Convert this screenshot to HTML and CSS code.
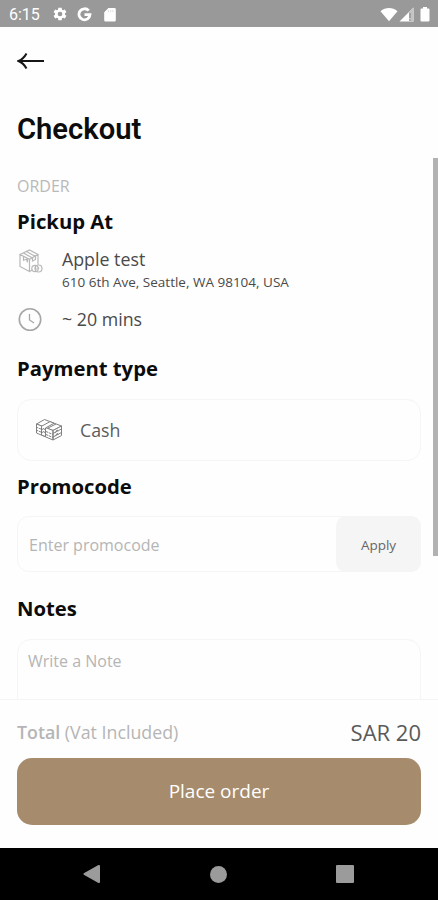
FILE: index.html
```html
<!DOCTYPE html>
<html lang="en">
<head>
<meta charset="UTF-8">
<meta name="viewport" content="width=device-width, initial-scale=1.0">
<title>Checkout</title>
<link rel="stylesheet" href="styles.css">
</head>
<body>

<div class="status-bar">
  <span class="time">6:15</span>
  <svg class="gear" width="16" height="16" viewBox="0 0 24 24"><path fill="#fff" fill-rule="evenodd" d="M19.4 13c.1-.6.1-1.300 0-2l2.200-1.700-2.200-3.900-2.700 1.100-1.700-1L14.500 2.500h-5L9 5.500l-1.700 1-2.700-1.100-2.200 3.900L4.600 11c-.1.700-.1 1.400 0 2l-2.200 1.700 2.200 3.900 2.700-1.100 1.700 1 .5 3h5l.5-3 1.700-1 2.700 1.100 2.200-3.900zM12 8.500a3.500 3.500 0 1 1 0 7 3.500 3.500 0 0 1 0-7z"/></svg>
  <svg class="google" width="15" height="15" viewBox="0 0 15 15"><path fill="none" stroke="#fff" stroke-width="2.800" d="M11.700 3.700A5.500 5.500 0 1 0 13 7.700H7.500"/></svg>
  <svg class="sd" width="12" height="15" viewBox="0 0 12 15"><path fill="#fff" d="M4.500 1H10.500a1.300 1.300 0 0 1 1.300 1.300v10.900a1.300 1.300 0 0 1-1.300 1.300h-9a1.300 1.300 0 0 1-1.300-1.300V5.200z"/><path stroke="#ddd" stroke-width="1" d="M4.500 3.200v2M6.700 3.200v2M8.900 3.200v2"/></svg>
  <div class="signals">
    <svg width="18" height="15" viewBox="0 0 18 15"><path fill="#fff" d="M.5 4.200C5.500-.2 12.500-.2 17.500 4.200L9 14.300z"/></svg>
    <svg class="cell" width="15" height="15" viewBox="0 0 15 15"><path fill="#fff" d="M14.500.5v14H.5z"/><path fill="#c4c4c4" d="M10 5l4.500-4.500v14H10z"/><path stroke="#8d8d8d" stroke-width="1.200" d="M11 6v5M11 12.200v1.500"/></svg>
    <svg class="battery" width="10" height="15" viewBox="0 0 10 15"><path fill="#fff" d="M3 0h4v1.500h1.500q1 0 1 1v11q0 1-1 1h-7q-1 0-1-1v-11q0-1 1-1H3z"/></svg>
  </div>
</div>

<main class="content">
  <svg class="back" width="28" height="18" viewBox="0 0 28 18"><path d="M27 9H1.500M9.500 1.500Q6.500 7 1.500 9Q6.500 11 9.500 16.500" fill="none" stroke="#161616" stroke-width="2"/></svg>
  <h1>Checkout</h1>

  <div class="label">ORDER</div>
  <h2 class="pickup-title">Pickup At</h2>
  <div class="row place">
    <svg width="26" height="28" viewBox="0 -2 26 28" fill="none" stroke="#b8b8b8" stroke-width="1.200">
      <path d="M2 5.500L11.500 1l8.500 4.500-8.500 4.700zM2 5.500v12l9.500 5V10.200M20 5.500v10M11.500 22.500l3-1.500M5.500 4l9 5M8.500 2.500l9 5M5.500 7.200v4l3-1 1 3V9M14.500 9v3l3-1.500V7.500"/>
      <circle cx="17" cy="19.500" r="3.200"/><circle cx="20.500" cy="19.500" r="3.500"/><path d="M17.500 18v2h2M20.500 18v2"/>
    </svg>
    <div>
      <div class="name">Apple test</div>
      <div class="address">610 6th Ave, Seattle, WA 98104, USA</div>
    </div>
  </div>
  <div class="row eta">
    <svg width="26" height="26" viewBox="0 0 26 26" fill="none" stroke="#a6a6a6"><circle cx="12" cy="13.500" r="10.700" stroke-width="1.600"/><path d="M11.500 8v6l4.500 3" stroke-width="1.300"/></svg>
    <div class="name">~ 20 mins</div>
  </div>

  <h2 class="payment-title">Payment type</h2>
  <div class="card">
    <svg width="28" height="24" viewBox="0 0 28 24" fill="#fff" stroke="#808080" stroke-width="1" stroke-linejoin="round">
      <path d="M1.500 6L9.500 1.500L26.500 8l-8.500 4.500z"/>
      <path d="M1.500 6L18 12.500v9.500L1.500 15zM18 12.500L26.500 8v9.500L18 22z"/>
      <path fill="none" stroke-dasharray="2.500 .8" d="M1 9l6 2.500M1 12l6 2.500M11 13.500l7 3M11 16.500l7 3M18 15.500l8-4.300M18 19l8-4.300"/>
      <path d="M6.500 8.300L15 3.600l4 1.700-8.500 4.700v8.500l-4-1.500z"/>
      <path fill="none" d="M7 11.500l2-1 1.500 2M7 14.500l2-1 1.500 2M13 10l8-4M20 15l2-3 2 1M20 18.500l2-3 2 1"/>
    </svg>
    <span>Cash</span>
  </div>

  <h2 class="promo-title">Promocode</h2>
  <div class="promo">
    <input type="text" placeholder="Enter promocode">
    <button>Apply</button>
  </div>

  <h2 class="notes-title">Notes</h2>
  <textarea placeholder="Write a Note"></textarea>
  <div class="scrollbar"></div>
</main>

<footer class="summary">
  <div class="total">
    <span><b>Total</b> (Vat Included)</span>
    <span class="price">SAR 20</span>
  </div>
  <button class="place-order">Place order</button>
</footer>

<nav class="nav-bar">
  <svg width="18" height="20" viewBox="0 0 18 20"><path fill="#9b9b9b" d="M.8 9.200L15.500 1Q17 .6 17 2v16q0 1.400-1.500 1L.8 10.800Q0 10 .8 9.200z"/></svg>
  <div class="home"></div>
  <div class="recent"></div>
</nav>

</body>
</html>
```
FILE: styles.css
```css
* {
  box-sizing: border-box;
}
body {
  margin: 0;
  height: 900px;
  display: flex;
  flex-direction: column;
  overflow: hidden;
  background-color: #fefefe;
  font-family: "Open Sans", sans-serif;
  color: #4a4a4a;
}
svg {
  display: block;
  flex: none;
}
h1, h2 {
  margin: 0;
  color: #0c0c0c;
}
input, textarea, button {
  font-family: inherit;
  border: 0;
  outline: 0;
}
.status-bar {
  height: 27px;
  flex: none;
  display: flex;
  align-items: center;
  padding: 1px 8px 0 9px;
  background-color: #999;
  color: #fff;
}
.time {
  width: 43px;
  padding-top: 1px;
  font: 16px/26px Roboto, sans-serif;
}
.google {
  margin-left: 9px;
}
.sd {
  margin-left: 12px;
}
.signals {
  display: flex;
  margin-left: auto;
}
.cell {
  margin-left: 1px;
}
.battery {
  margin-left: 6px;
}
.content {
  position: relative;
  flex: 1;
  min-height: 0;
  overflow: hidden;
  padding: 25px 17px 0;
}
h1 {
  margin-top: 41px;
  font: 600 29.2px/36px Roboto, sans-serif;
}
.label {
  margin-top: 28px;
  font-size: 16px;
  line-height: 22px;
  color: #b9b9b9;
}
h2 {
  font-size: 20.3px;
  line-height: 28px;
  font-weight: 700;
}
.pickup-title {
  margin-top: 10px;
}
.row {
  display: flex;
  gap: 18px;
  padding-left: 1px;
}
.place {
  margin-top: 12px;
}
.name {
  font-size: 17.8px;
  line-height: 24px;
}
.address {
  font-size: 13.5px;
  line-height: 22px;
}
.eta {
  align-items: center;
  margin-top: 13px;
}
.payment-title {
  margin-top: 22px;
}
.card {
  display: flex;
  align-items: center;
  gap: 17px;
  height: 62px;
  margin-top: 17px;
  padding-left: 17px;
  border: 1px solid #f5f5f5;
  border-radius: 14px;
  font-size: 17.8px;
  color: #5c5c5c;
}
.promo-title {
  margin-top: 11px;
}
.promo {
  display: flex;
  height: 56px;
  margin-top: 16px;
  border: 1px solid #f5f5f5;
  border-radius: 12px;
}
.promo input {
  flex: 1;
  min-width: 0;
  padding: 2px 11px 0;
  background: none;
  font-size: 16px;
}
.promo button {
  width: 85px;
  margin: -1px;
  padding-top: 2px;
  border-radius: 10px;
  background-color: #f5f5f5;
  font-size: 13.5px;
  color: #666;
}
::placeholder {
  color: #b5b5b5;
}
.notes-title {
  margin-top: 22px;
}
textarea {
  display: block;
  width: 100%;
  height: 110px;
  margin-top: 17px;
  padding: 10px;
  border: 1px solid #f5f5f5;
  border-radius: 14px;
  background: none;
  font-size: 16px;
  line-height: 22px;
  resize: none;
}
.scrollbar {
  position: absolute;
  top: 131px;
  right: 0;
  width: 5px;
  height: 398px;
  background-color: #b2b2b2;
}
.summary {
  height: 149px;
  flex: none;
  padding: 16px 17px 0;
  border-top: 1px solid #f4f4f4;
}
.total {
  display: flex;
  justify-content: space-between;
  align-items: center;
  height: 32px;
  margin-bottom: 10px;
  font-size: 17.8px;
  color: #b5b5b5;
}
.total b {
  font-weight: 600;
}
.price {
  font-size: 22px;
  font-weight: 500;
  color: #5a5a5a;
}
.place-order {
  display: block;
  width: 100%;
  height: 67px;
  padding-bottom: 2px;
  border-radius: 15px;
  background-color: #a68c6d;
  color: #fff;
  font-size: 19px;
}
.nav-bar {
  height: 52px;
  flex: none;
  display: flex;
  align-items: center;
  justify-content: space-between;
  padding: 0 84px 0 83px;
  background-color: #000;
}
.home {
  width: 17px;
  height: 17px;
  border-radius: 50%;
  background-color: #9b9b9b;
}
.recent {
  width: 18px;
  height: 18px;
  border-radius: 1px;
  background-color: #9b9b9b;
}
```
